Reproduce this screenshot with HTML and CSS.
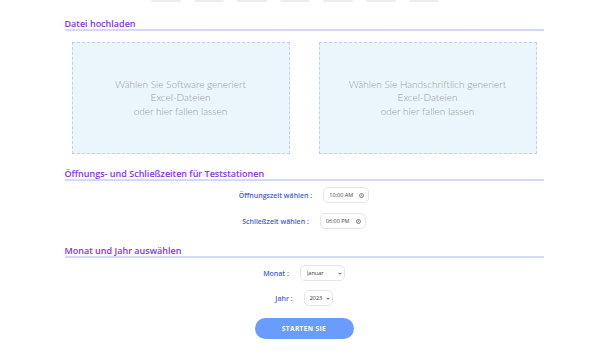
FILE: index.html
```html
<!DOCTYPE html>
<html lang="de">
  <head>
    <meta charset="utf-8" />
    <meta name="viewport" content="width=device-width, initial-scale=1" />
    <link rel="stylesheet" href="styles.css">
  </head>
  <body>
    <div class="tabs">
      <span class="tab"></span>
      <span class="tab"></span>
      <span class="tab"></span>
      <span class="tab"></span>
      <span class="tab"></span>
      <span class="tab"></span>
      <span class="tab"></span>
    </div>

    <div class="container">
      <h2 class="section-title">Datei hochladen</h2>

      <div class="upload">
        <label class="dropzone">
          <span>Wählen Sie Software generiert</span>
          <span>Excel-Dateien</span>
          <span>oder hier fallen lassen</span>
        </label>
        <label class="dropzone">
          <span>Wählen Sie Handschriftlich generiert</span>
          <span>Excel-Dateien</span>
          <span>oder hier fallen lassen</span>
        </label>
      </div>

      <h2 class="section-title second">Öffnungs- und Schließzeiten für Teststationen</h2>

      <div class="row first-row">
        <label for="open">Öffnungszeit wählen :</label>
        <span class="time-field">
          <input type="text" id="open" value="10:00 AM" readonly />
          <svg class="clock" viewBox="0 0 10 10" width="5" height="5">
            <circle cx="5" cy="5" r="4" fill="none" stroke="#555" stroke-width="1.4" />
            <path d="M5 2.8V5.2L6.6 6.2" fill="none" stroke="#555" stroke-width="1.2" />
          </svg>
        </span>
      </div>
      <div class="row">
        <label for="close">Schließzeit wählen :</label>
        <span class="time-field">
          <input type="text" id="close" value="06:00 PM" readonly />
          <svg class="clock" viewBox="0 0 10 10" width="5" height="5">
            <circle cx="5" cy="5" r="4" fill="none" stroke="#555" stroke-width="1.4" />
            <path d="M5 2.8V5.2L6.6 6.2" fill="none" stroke="#555" stroke-width="1.2" />
          </svg>
        </span>
      </div>

      <h2 class="section-title third">Monat und Jahr auswählen</h2>

      <div class="row first-row month-row">
        <label for="month">Monat :</label>
        <span class="select-wrap">
          <select id="month" class="month">
            <option>Januar</option>
            <option>Februar</option>
            <option>März</option>
            <option>April</option>
            <option>Mai</option>
            <option>Juni</option>
            <option>Juli</option>
            <option>August</option>
            <option>September</option>
            <option>Oktober</option>
            <option>November</option>
            <option>Dezember</option>
          </select>
          <svg class="chevron" viewBox="0 0 8 5" width="4" height="3">
            <path d="M1 1L4 4L7 1" fill="none" stroke="#222" stroke-width="1.6" />
          </svg>
        </span>
      </div>
      <div class="row year-row">
        <label for="year">Jahr :</label>
        <span class="select-wrap">
          <select id="year" class="year">
            <option>2023</option>
            <option>2024</option>
          </select>
          <svg class="chevron" viewBox="0 0 8 5" width="4" height="3">
            <path d="M1 1L4 4L7 1" fill="none" stroke="#222" stroke-width="1.6" />
          </svg>
        </span>
      </div>

      <button class="start">STARTEN SIE</button>
    </div>
  </body>
</html>
```

FILE: styles.css
```css
body {
  margin: 0;
  font-family: "Open Sans", "Liberation Sans", sans-serif;
  background: #fff;
}

/* Reste der oberen Navigation */
.tabs {
  display: flex;
  justify-content: center;
  gap: 13px;
  padding-right: 18px;
  height: 2px;
}

.tab {
  width: 30px;
  height: 2px;
  background: #ececec;
  border-radius: 0 0 3px 3px;
}

.container {
  width: 479px;
  margin: 0 auto;
}

/* Abschnittsüberschriften */
.section-title {
  margin: 16px 0 0;
  font-size: 9px;
  line-height: 11px;
  font-weight: 600;
  color: #8433f6;
  border-bottom: 2px solid #d6d8fb;
}

.section-title.second {
  margin-top: 14px;
}

.section-title.third {
  margin-top: 16px;
}

/* Upload-Felder */
.upload {
  display: grid;
  grid-template-columns: 218px 218px;
  gap: 29px;
  padding: 0 6px 0 7px;
  margin-top: 11px;
}

.dropzone {
  height: 110px;
  display: flex;
  flex-direction: column;
  justify-content: center;
  align-items: center;
  background: #eaf6fc;
  border: 1px dashed #c3cdf5;
  font-family: Lato, "Open Sans", sans-serif;
  font-weight: 300;
  font-size: 10px;
  line-height: 13.5px;
  color: #9a9a9a;
}

/* Zeilen mit Beschriftung und Eingabe */
.row {
  display: flex;
  justify-content: center;
  align-items: center;
  gap: 11px;
  margin-top: 10px;
}

.row.first-row {
  margin-top: 6px;
}

.row.month-row {
  margin-top: 7px;
}

.row.year-row {
  margin-top: 9px;
}

.row label {
  font-size: 7px;
  font-weight: 600;
  color: #4b5ed6;
}

/* Zeitfelder */
.time-field {
  display: inline-flex;
  align-items: center;
  width: 46px;
  height: 16px;
  box-sizing: border-box;
  padding: 0 4px 0 5px;
  border: 1px solid #e6e6e6;
  border-radius: 5px;
  background: #fff;
}

.time-field input {
  width: 30px;
  padding: 0;
  border: none;
  outline: none;
  font-family: "Open Sans", sans-serif;
  font-size: 5.5px;
  color: #444;
  background: transparent;
}

.clock {
  margin-left: auto;
}

/* Auswahlfelder */
.select-wrap {
  position: relative;
  display: inline-flex;
}

select {
  appearance: none;
  height: 16px;
  box-sizing: border-box;
  padding: 0 8px 0 6px;
  border: 1px solid #e6e6e6;
  border-radius: 5px;
  background: #fff;
  font-family: "Open Sans", sans-serif;
  font-size: 5.5px;
  color: #333;
}

.month {
  width: 45px;
}

.year {
  width: 29px;
  padding-left: 5px;
}

.chevron {
  position: absolute;
  right: 3px;
  top: 6.5px;
  pointer-events: none;
}

/* Startknopf */
.start {
  display: block;
  width: 99px;
  height: 21px;
  margin: 12px auto 0;
  border: none;
  border-radius: 11px;
  background: #6a9cff;
  color: #fff;
  font-family: "Open Sans", sans-serif;
  font-size: 6.5px;
  font-weight: 700;
  letter-spacing: 0.4px;
}
```
